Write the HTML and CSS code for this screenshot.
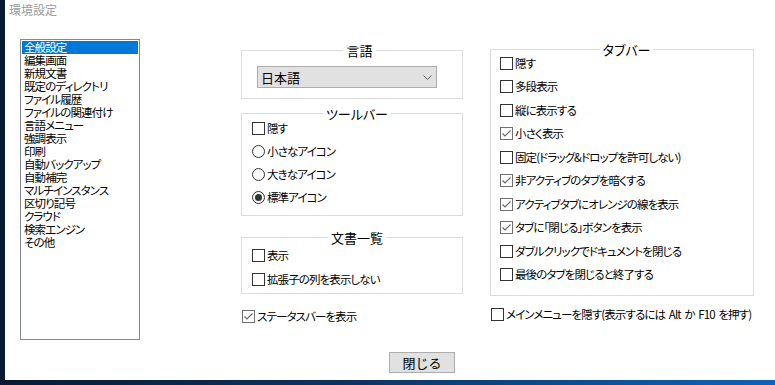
FILE: index.html
```html
<!DOCTYPE html>
<html lang="ja">
<head>
    <meta charset="UTF-8">
    <title>環境設定</title>
    <link rel="stylesheet" href="styles.css">
</head>
<body>
<div class="desk">
    <div class="window">
        <div class="title">環境設定</div>

        <div class="main">
            <ul class="list">
                <li class="sel">全般設定</li>
                <li>編集画面</li>
                <li>新規文書</li>
                <li>既定のディレクトリ</li>
                <li>ファイル履歴</li>
                <li>ファイルの関連付け</li>
                <li>言語メニュー</li>
                <li>強調表示</li>
                <li>印刷</li>
                <li>自動バックアップ</li>
                <li>自動補完</li>
                <li>マルチインスタンス</li>
                <li>区切り記号</li>
                <li>クラウド</li>
                <li>検索エンジン</li>
                <li>その他</li>
            </ul>

            <div class="mid">
                <fieldset class="grp lang">
                    <legend>言語</legend>
                    <div class="select">
                        <span>日本語</span>
                        <svg width="9" height="5" viewBox="0 0 9 5"><polyline points="0.5,0.5 4.5,4.5 8.5,0.5" fill="none" stroke="#606060" stroke-width="1"/></svg>
                    </div>
                </fieldset>

                <fieldset class="grp tool">
                    <legend>ツールバー</legend>
                    <div class="rows">
                        <label class="opt"><span class="box"></span>隠す</label>
                        <label class="opt"><span class="radio"></span>小さなアイコン</label>
                        <label class="opt"><span class="radio"></span>大きなアイコン</label>
                        <label class="opt"><span class="radio on"></span>標準アイコン</label>
                    </div>
                </fieldset>

                <fieldset class="grp docs">
                    <legend>文書一覧</legend>
                    <div class="rows wide">
                        <label class="opt"><span class="box"></span>表示</label>
                        <label class="opt"><span class="box"></span>拡張子の列を表示しない</label>
                    </div>
                </fieldset>

                <label class="opt status"><span class="box on"><svg width="11" height="11" viewBox="0 0 11 11"><polyline points="1.5,5.5 4,8 9.5,2.5" fill="none" stroke="#6a6a6a" stroke-width="1.2"/></svg></span>ステータスバーを表示</label>
            </div>

            <div class="side">
                <fieldset class="grp tabs">
                    <legend>タブバー</legend>
                    <div class="rows tabrows">
                        <label class="opt"><span class="box"></span>隠す</label>
                        <label class="opt"><span class="box"></span>多段表示</label>
                        <label class="opt"><span class="box"></span>縦に表示する</label>
                        <label class="opt"><span class="box on"><svg width="11" height="11" viewBox="0 0 11 11"><polyline points="1.5,5.5 4,8 9.5,2.5" fill="none" stroke="#6a6a6a" stroke-width="1.2"/></svg></span>小さく表示</label>
                        <label class="opt"><span class="box"></span>固定(ドラッグ&amp;ドロップを許可しない)</label>
                        <label class="opt"><span class="box on"><svg width="11" height="11" viewBox="0 0 11 11"><polyline points="1.5,5.5 4,8 9.5,2.5" fill="none" stroke="#6a6a6a" stroke-width="1.2"/></svg></span>非アクティブのタブを暗くする</label>
                        <label class="opt"><span class="box on"><svg width="11" height="11" viewBox="0 0 11 11"><polyline points="1.5,5.5 4,8 9.5,2.5" fill="none" stroke="#6a6a6a" stroke-width="1.2"/></svg></span>アクティブタブにオレンジの線を表示</label>
                        <label class="opt"><span class="box on"><svg width="11" height="11" viewBox="0 0 11 11"><polyline points="1.5,5.5 4,8 9.5,2.5" fill="none" stroke="#6a6a6a" stroke-width="1.2"/></svg></span>タブに「閉じる」ボタンを表示</label>
                        <label class="opt"><span class="box"></span>ダブルクリックでドキュメントを閉じる</label>
                        <label class="opt"><span class="box"></span>最後のタブを閉じると終了する</label>
                    </div>
                </fieldset>

                <label class="opt menu"><span class="box"></span>メインメニューを隠す(表示するには Alt か F10 を押す)</label>
            </div>
        </div>

        <div class="footer">
            <button class="close">閉じる</button>
        </div>
    </div>
</div>
</body>
</html>
```

FILE: styles.css
```css
body {
    margin: 0;
    font-family: "Noto Sans CJK JP", sans-serif;
    font-feature-settings: "palt";
    color: #000;
}

/* desktop behind the window */
.desk {
    width: 775px;
    height: 385px;
    display: flex;
    background: linear-gradient(90deg, #081a33 0%, #0c3461 45%, #0e63b9 100%);
}

.window {
    margin-left: 5px;
    width: 770px;
    height: 380px;
    background-color: #ffffff;
}

.title {
    height: 20px;
    box-sizing: border-box;
    padding: 3px 0 0 4px;
    font-size: 12px;
    line-height: 13px;
    color: #9c9c9c;
}

.main {
    display: flex;
    align-items: flex-start;
    padding-left: 15px;
}

/* category list */
.list {
    margin: 19px 0 0;
    padding: 1px;
    list-style: none;
    width: 120px;
    height: 301px;
    box-sizing: border-box;
    border: 1px solid #828790;
    font-size: 11.5px;
    letter-spacing: -0.9px;
    line-height: 13px;
}

.list li {
    height: 13px;
    padding-left: 2px;
    white-space: nowrap;
}

.list .sel {
    background-color: #0078d7;
    color: #ffffff;
}

/* columns */
.mid {
    margin: 23px 0 0 101px;
    width: 222px;
}

.side {
    margin: 22px 0 0 27px;
    width: 264px;
}

/* group boxes */
.grp {
    margin: 0;
    min-width: 0;
    border: 1px solid #dcdcdc;
    padding: 0 0 0 10px;
}

.grp legend {
    margin: 0 auto;
    padding: 0 3px;
    font-size: 13px;
    line-height: 15px;
}

.lang {
    padding: 8px 0 10px 15px;
}

.tool {
    margin-top: 7px;
    padding: 1px 0 11px 10px;
}

.docs {
    margin-top: 14px;
    padding: 4px 0 7px 10px;
}

.tabs {
    padding: 0 0 14px 9px;
}

.rows {
    display: flex;
    flex-direction: column;
    gap: 10px;
}

.rows.wide {
    gap: 11px;
}

.rows.tabrows {
    gap: 10.45px;
}

/* select */
.select {
    display: flex;
    align-items: center;
    justify-content: space-between;
    width: 180px;
    height: 22px;
    box-sizing: border-box;
    border: 1px solid #adadad;
    background-color: #e1e1e1;
    padding: 0 4px 0 3px;
    font-size: 13px;
}

/* checkboxes and radios */
.opt {
    display: flex;
    align-items: center;
    height: 13px;
    font-size: 11.5px;
    letter-spacing: -0.9px;
    line-height: 13px;
    white-space: nowrap;
}

.box {
    flex: none;
    width: 13px;
    height: 13px;
    box-sizing: border-box;
    border: 1px solid #333333;
    background-color: #ffffff;
    margin-right: 2px;
    display: flex;
    align-items: center;
    justify-content: center;
}

.box.on {
    border-color: #707070;
}

.radio {
    flex: none;
    width: 13px;
    height: 13px;
    box-sizing: border-box;
    border: 1px solid #333333;
    border-radius: 50%;
    margin-right: 2px;
    display: flex;
    align-items: center;
    justify-content: center;
}

.radio.on::after {
    content: "";
    width: 7px;
    height: 7px;
    border-radius: 50%;
    background-color: #333333;
}

.status {
    margin: 16px 0 0 1px;
}

.menu {
    margin: 12px 0 0 1px;
    word-spacing: 2px;
}

/* bottom button */
.footer {
    padding-left: 384px;
    margin-top: 9px;
}

.close {
    width: 66px;
    height: 21px;
    padding: 0;
    border: 1px solid #adadad;
    background-color: #e1e1e1;
    font-family: "Noto Sans CJK JP", sans-serif;
    font-size: 13px;
    line-height: 19px;
}
```
